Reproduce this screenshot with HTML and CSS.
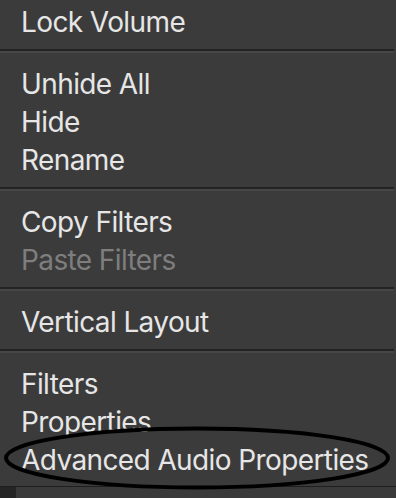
FILE: index.html
```
<!DOCTYPE html>
<html>
<head>
<meta charset="utf-8">
<link rel="stylesheet" href="styles.css">
</head>
<body>
<div class="screen">
  <div class="menu">
    <div class="item">Lock Volume</div>
    <div class="sep"><div class="sep-line"></div></div>
    <div class="item">Unhide All</div>
    <div class="item">Hide</div>
    <div class="item">Rename</div>
    <div class="sep"><div class="sep-line"></div></div>
    <div class="item">Copy Filters</div>
    <div class="item disabled">Paste Filters</div>
    <div class="sep"><div class="sep-line"></div></div>
    <div class="item">Vertical Layout</div>
    <div class="sep"><div class="sep-line"></div></div>
    <div class="item">Filters</div>
    <div class="item">Properties</div>
    <div class="item">Advanced Audio Properties</div>
  </div>
  <div class="footer">
    <div class="footer-left"></div>
    <div class="footer-right"></div>
  </div>
  <svg class="circle" width="396" height="80" viewBox="0 0 396 80">
    <ellipse cx="197" cy="38" rx="191" ry="29.5" fill="none" stroke="#000" stroke-width="4"/>
  </svg>
</div>
</body>
</html>
```
FILE: styles.css
```
html, body {
  margin: 0;
  padding: 0;
  background: #3b3b3b;
}
.screen {
  position: relative;
  width: 396px;
  height: 498px;
  overflow: hidden;
  background: #3b3b3b;
  display: flex;
  flex-direction: column;
}
.menu {
  width: 394px;
  padding-top: 3px;
  padding-bottom: 7px;
  display: flex;
  flex-direction: column;
}
.item {
  height: 38px;
  line-height: 38px;
  padding-left: 21px;
  font-family: Inter, "Noto Sans", sans-serif;
  font-size: 28px;
  letter-spacing: -0.6px;
  color: #e6e6e6;
  white-space: nowrap;
}
.item.disabled {
  color: #7e7e7e;
}
.sep {
  height: 24px;
  display: flex;
  flex-direction: column;
}
.sep-line {
  margin-top: 8px;
  height: 2px;
  background: #232323;
  border-bottom: 2px solid #464646;
}
.footer {
  flex: 1;
  display: flex;
  border-top: 1px solid #1e1e1e;
}
.footer-left {
  width: 16px;
  background: #252525;
}
.footer-right {
  flex: 1;
  background: #3a3a3a;
}
.circle {
  position: absolute;
  left: 0;
  top: 420px;
}
```
